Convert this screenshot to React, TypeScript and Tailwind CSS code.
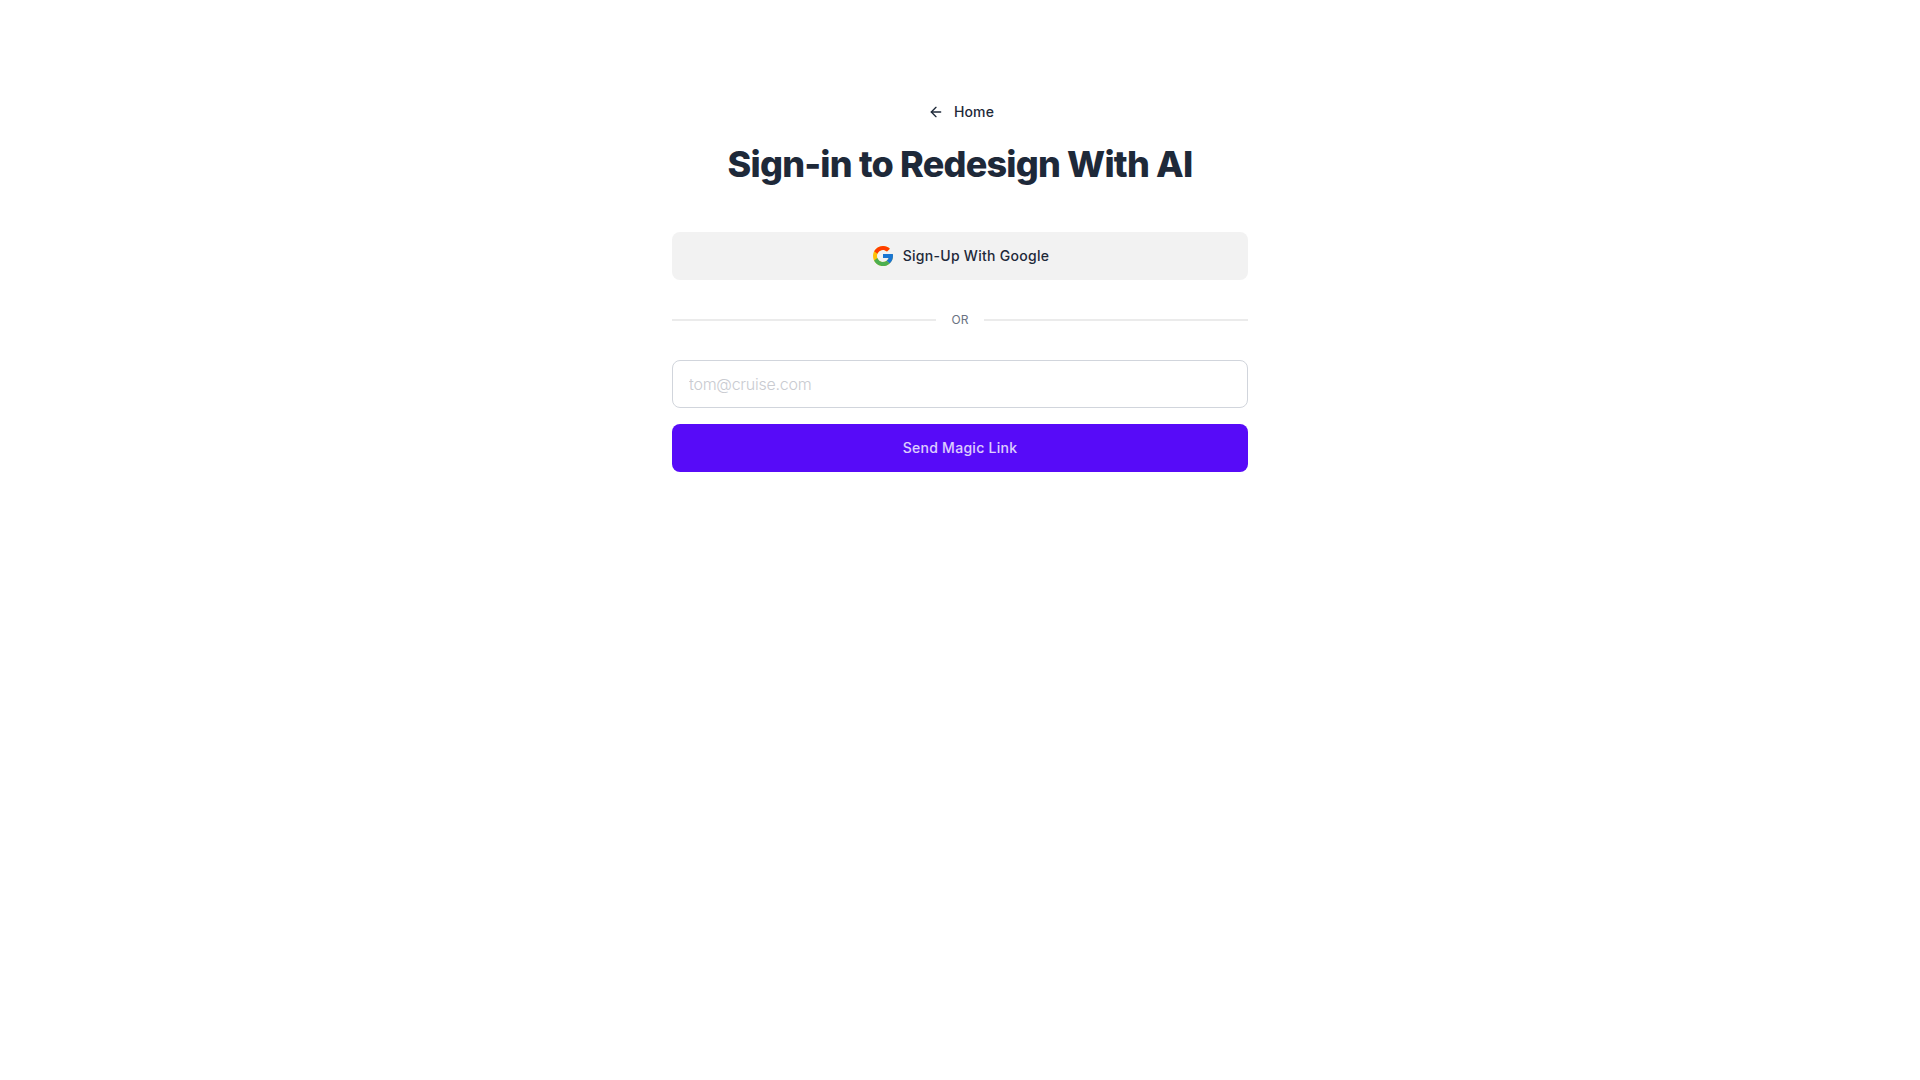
import { ArrowLeft } from 'lucide-react'

/* ── Google logo ────────────────────────────────────────────── */
function GoogleIcon() {
  return (
    <svg viewBox="4 4 40 40" className="w-5 h-5 shrink-0">
      <path fill="#FFC107" d="M43.6 20.1H42V20H24v8h11.3C33.7 32.7 29.2 36 24 36c-6.6 0-12-5.4-12-12s5.4-12 12-12c3.1 0 5.8 1.2 8 3l5.7-5.7C34 6.1 29.3 4 24 4 13 4 4 13 4 24s9 20 20 20 20-9 20-20c0-1.3-.1-2.7-.4-3.9z" />
      <path fill="#FF3D00" d="M6.3 14.7l6.6 4.8C14.7 15.1 19 12 24 12c3.1 0 5.8 1.2 8 3l5.7-5.7C34 6.1 29.3 4 24 4 16.3 4 9.7 8.3 6.3 14.7z" />
      <path fill="#4CAF50" d="M24 44c5.2 0 9.9-2 13.4-5.2l-6.2-5.2C29.2 35.1 26.7 36 24 36c-5.2 0-9.6-3.3-11.3-8l-6.5 5C9.5 39.6 16.2 44 24 44z" />
      <path fill="#1976D2" d="M43.6 20.1H42V20H24v8h11.3c-.8 2.2-2.2 4.2-4.1 5.6l6.2 5.2C37 39.2 44 34 44 24c0-1.3-.1-2.7-.4-3.9z" />
    </svg>
  )
}

/* ── Page ───────────────────────────────────────────────────── */
export default function App() {
  return (
    <main className="min-h-screen bg-white flex flex-col items-center pt-[100px] font-['Inter',sans-serif]">
      <a href="#home" className="ml-0.5 flex items-center gap-2.5 h-6 text-sm font-medium tracking-[0.01em] text-gray-800">
        <ArrowLeft className="w-4 h-4" strokeWidth={2} />
        <span>Home</span>
      </a>

      <h1 className="mt-4 text-4xl leading-[48px] font-extrabold tracking-[-0.8px] text-gray-800 text-center">
        Sign-in to Redesign With AI
      </h1>

      <div className="w-[576px] mt-11 flex flex-col">
        <button className="h-12 pl-0.5 flex items-center justify-center gap-2.5 rounded-lg bg-[#f2f2f2] text-sm font-medium tracking-[0.02em] text-gray-800">
          <GoogleIcon />
          Sign-Up With Google
        </button>

        {/* Divider */}
        <div className="h-20 flex items-center">
          <div className="flex-1 h-0.5 bg-[#ebebeb]" />
          <span className="px-4 text-xs text-gray-500">OR</span>
          <div className="flex-1 h-0.5 bg-[#ebebeb]" />
        </div>

        <input
          type="email"
          placeholder="tom@cruise.com"
          className="h-12 px-4 rounded-lg border border-gray-300 bg-white text-base font-light tracking-[-0.25px] text-gray-800 placeholder:text-[#c9cbd1] outline-none"
        />

        <button className="mt-4 h-12 rounded-lg bg-[#570bf8] text-sm font-medium tracking-[0.02em] text-white/80">
          Send Magic Link
        </button>
      </div>
    </main>
  )
}
